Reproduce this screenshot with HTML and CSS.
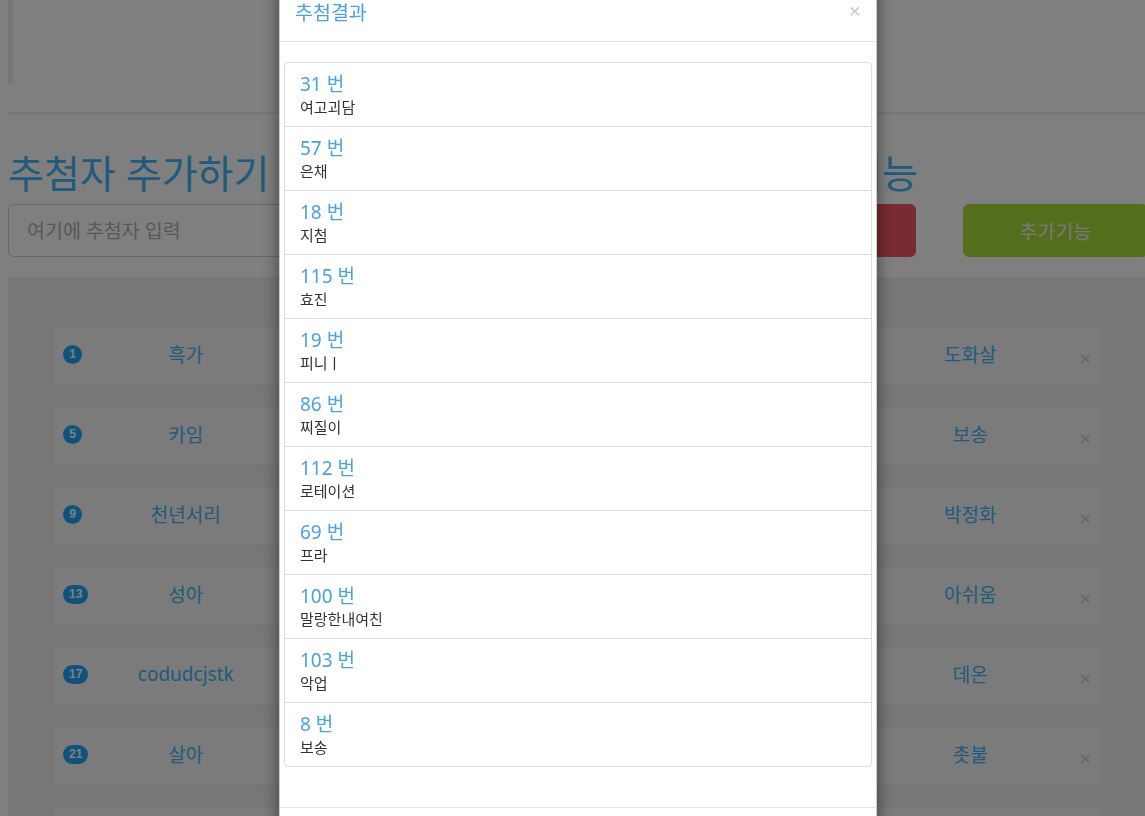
FILE: index.html
```html
<!DOCTYPE html>
<html lang="ko">
<head>
<meta charset="utf-8">
<title>추첨</title>
<link rel="stylesheet" href="styles.css">
</head>
<body>
<div class="page">
  <div class="quote"></div>
  <hr class="rule">
  <div class="toprow">
    <h1 class="heading">추첨자 추가하기</h1>
    <h1 class="heading heading-right">추첨기능</h1>
    <div></div>
    <input class="entry" type="text" placeholder="여기에 추첨자 입력">
    <button class="btn btn-red">추첨하기</button>
    <button class="btn btn-green">추가기능</button>
  </div>
  <div class="panel">
    <div class="card">
      <div class="cell"><span class="badge">1</span><span class="name">흑가</span><span class="x">×</span></div>
      <div class="cell"><span class="badge">2</span><span class="name">은채</span><span class="x">×</span></div>
      <div class="cell"><span class="badge">3</span><span class="name">지첨</span><span class="x">×</span></div>
      <div class="cell"><span class="badge">4</span><span class="name">도화살</span><span class="x">×</span></div>
    </div>
    <div class="card">
      <div class="cell"><span class="badge">5</span><span class="name">카임</span><span class="x">×</span></div>
      <div class="cell"><span class="badge">6</span><span class="name">효진</span><span class="x">×</span></div>
      <div class="cell"><span class="badge">7</span><span class="name">피니ㅣ</span><span class="x">×</span></div>
      <div class="cell"><span class="badge">8</span><span class="name">보송</span><span class="x">×</span></div>
    </div>
    <div class="card">
      <div class="cell"><span class="badge">9</span><span class="name">천년서리</span><span class="x">×</span></div>
      <div class="cell"><span class="badge">10</span><span class="name">찌질이</span><span class="x">×</span></div>
      <div class="cell"><span class="badge">11</span><span class="name">로테이션</span><span class="x">×</span></div>
      <div class="cell"><span class="badge">12</span><span class="name">박정화</span><span class="x">×</span></div>
    </div>
    <div class="card">
      <div class="cell"><span class="badge">13</span><span class="name">성아</span><span class="x">×</span></div>
      <div class="cell"><span class="badge">14</span><span class="name">프라</span><span class="x">×</span></div>
      <div class="cell"><span class="badge">15</span><span class="name">말랑한내여친</span><span class="x">×</span></div>
      <div class="cell"><span class="badge">16</span><span class="name">아쉬움</span><span class="x">×</span></div>
    </div>
    <div class="card">
      <div class="cell"><span class="badge">17</span><span class="name">codudcjstk</span><span class="x">×</span></div>
      <div class="cell"><span class="badge">18</span><span class="name">악업</span><span class="x">×</span></div>
      <div class="cell"><span class="badge">19</span><span class="name">여고괴담</span><span class="x">×</span></div>
      <div class="cell"><span class="badge">20</span><span class="name">데온</span><span class="x">×</span></div>
    </div>
    <div class="card">
      <div class="cell"><span class="badge">21</span><span class="name">살아</span><span class="x">×</span></div>
      <div class="cell"><span class="badge">22</span><span class="name">은채</span><span class="x">×</span></div>
      <div class="cell"><span class="badge">23</span><span class="name">지첨</span><span class="x">×</span></div>
      <div class="cell"><span class="badge">24</span><span class="name">촛불</span><span class="x">×</span></div>
    </div>
    <div class="card">
      <div class="cell"><span class="badge">25</span><span class="name">효진</span><span class="x">×</span></div>
      <div class="cell"><span class="badge">26</span><span class="name">찌질이</span><span class="x">×</span></div>
      <div class="cell"><span class="badge">27</span><span class="name">프라</span><span class="x">×</span></div>
      <div class="cell"><span class="badge">28</span><span class="name">악업</span><span class="x">×</span></div>
    </div>
  </div>
</div>

<div class="backdrop"></div>

<div class="modal">
  <div class="modal-header">
    <span class="close">×</span>
    <h4 class="modal-title">추첨결과</h4>
  </div>
  <div class="modal-body">
    <ul class="list">
      <li class="item"><div class="num">31 번</div><div class="who">여고괴담</div></li>
      <li class="item"><div class="num">57 번</div><div class="who">은채</div></li>
      <li class="item"><div class="num">18 번</div><div class="who">지첨</div></li>
      <li class="item"><div class="num">115 번</div><div class="who">효진</div></li>
      <li class="item"><div class="num">19 번</div><div class="who">피니ㅣ</div></li>
      <li class="item"><div class="num">86 번</div><div class="who">찌질이</div></li>
      <li class="item"><div class="num">112 번</div><div class="who">로테이션</div></li>
      <li class="item"><div class="num">69 번</div><div class="who">프라</div></li>
      <li class="item"><div class="num">100 번</div><div class="who">말랑한내여친</div></li>
      <li class="item"><div class="num">103 번</div><div class="who">악업</div></li>
      <li class="item"><div class="num">8 번</div><div class="who">보송</div></li>
    </ul>
  </div>
  <div class="modal-footer"></div>
</div>
</body>
</html>
```

FILE: styles.css
```css
html, body {
  margin: 0;
  padding: 0;
  height: 100%;
  overflow: hidden;
  background: #fff;
  font-family: "Noto Sans", "Noto Sans CJK KR", sans-serif;
  color: #333;
}

.page {
  width: 1140px;
  padding-left: 8px;
}

.quote {
  height: 83px;
  border-left: 5px solid #eaeaea;
}

.rule {
  margin: 29px 0 0;
  border: 0;
  border-top: 2px solid #ececec;
}

.toprow {
  display: grid;
  grid-template-columns: 525px 336px 185px;
  column-gap: 47px;
  row-gap: 9px;
  margin-top: 37px;
}

.heading {
  margin: 0;
  font-size: 39px;
  font-weight: 400;
  line-height: 44px;
  color: #40b4f8;
  white-space: nowrap;
}

.heading-right {
  text-align: right;
  margin-right: -2px;
}

.entry {
  box-sizing: border-box;
  height: 53px;
  border: 1px solid #cfcfcf;
  border-radius: 6px;
  padding: 0 18px;
  font-family: "Noto Sans", "Noto Sans CJK KR", sans-serif;
  font-size: 19.5px;
  color: #555;
  background: #fff;
}

.entry::placeholder {
  color: #b0b0b0;
}

.btn {
  height: 53px;
  border: 0;
  border-radius: 6px;
  font-family: "Noto Sans", "Noto Sans CJK KR", sans-serif;
  font-size: 19.5px;
  color: #fff;
}

.btn-red {
  background: #f25464;
}

.btn-green {
  background: #a8dc3a;
  color: #f4f4f4;
}

.panel {
  margin-top: 20px;
  background: #eeeeee;
  padding: 50px 47px 40px;
}

.card {
  display: grid;
  grid-template-columns: repeat(4, 1fr);
  height: 57px;
  margin-bottom: 23px;
  background: #f6f6f6;
  box-shadow: 0 0 1px rgba(0, 0, 0, 0.08);
}

.cell {
  display: grid;
  grid-template-columns: 48px 1fr 48px;
  align-items: center;
}

.badge {
  justify-self: start;
  margin-left: 8px;
  margin-top: -3px;
  min-width: 19px;
  box-sizing: border-box;
  height: 19px;
  padding: 0 6px;
  border-radius: 10px;
  background: #1fa6fb;
  color: #fff;
  font-family: "Liberation Sans", sans-serif;
  font-size: 12px;
  font-weight: 700;
  line-height: 19px;
  text-align: center;
}

.name {
  text-align: center;
  font-size: 19px;
  color: #40b4f8;
  margin-top: -3px;
}

.x {
  justify-self: end;
  margin-right: 10px;
  margin-top: 6px;
  font-size: 20px;
  line-height: 20px;
  color: #d0d0d0;
}

.backdrop {
  position: fixed;
  inset: 0;
  background: rgba(0, 0, 0, 0.5);
}

.modal {
  position: fixed;
  top: -15px;
  left: 279px;
  width: 598px;
  box-sizing: border-box;
  background: #fff;
  border: 1px solid rgba(0, 0, 0, 0.2);
  border-top: 0;
  box-shadow: 0 5px 15px rgba(0, 0, 0, 0.5);
}

.modal-header {
  padding: 15px;
  border-bottom: 1px solid #e5e5e5;
}

.modal-title {
  margin: 0;
  font-size: 19.5px;
  font-weight: 400;
  line-height: 26px;
  color: #4aa2e0;
}

.close {
  float: right;
  margin-top: -2px;
  font-family: "Liberation Sans", sans-serif;
  font-size: 21px;
  line-height: 26px;
  color: #c8c8c8;
}

.modal-body {
  padding: 20px 4px;
}

.list {
  list-style: none;
  margin: 0 0 20px;
  padding: 0;
}

.item {
  padding: 8px 15px 9px;
  border: 1px solid #dddddd;
  margin-bottom: -1px;
}

.item:first-child {
  border-radius: 4px 4px 0 0;
}

.item:last-child {
  border-radius: 0 0 4px 4px;
  margin-bottom: 0;
}

.num {
  font-size: 19px;
  line-height: 26px;
  color: #4aa2e0;
}

.who {
  font-size: 15px;
  line-height: 20px;
  color: #333;
}

.modal-footer {
  height: 60px;
  border-top: 1px solid #e5e5e5;
}
```
